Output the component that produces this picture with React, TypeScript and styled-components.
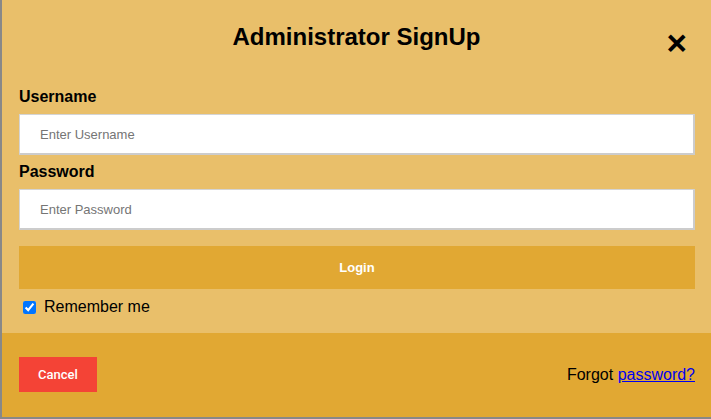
import React from "react";
import styled, { createGlobalStyle } from "styled-components";

const Global = createGlobalStyle`
  html, body { margin: 0; padding: 0; background: #ffffff; }
  body { font-family: "Liberation Sans", Arial, sans-serif; }
  * { box-sizing: border-box; }
`;

const Modal = styled.div`
  width: 711px;
  height: 419px;
  border-left: 2px solid #888888;
  border-bottom: 2px solid #888888;
  background: #e9bf6a;
  display: flex;
  flex-direction: column;
  overflow: hidden;
`;

const Header = styled.div`
  display: grid;
  grid-template-columns: 1fr auto 1fr;
  align-items: start;
  height: 76px;
  padding-top: 23px;
`;

const Title = styled.h2`
  grid-column: 2;
  margin: 0;
  font-size: 24px;
  line-height: 28px;
  font-weight: 700;
  color: #000;
`;

const Close = styled.span`
  grid-column: 3;
  justify-self: end;
  margin-right: 24px;
  margin-top: 5px;
  font-size: 35px;
  line-height: 30px;
  font-weight: 700;
  color: #000;
  cursor: pointer;
`;

const Form = styled.div`
  padding: 0 16px 0 17px;
  display: flex;
  flex-direction: column;
`;

const Label = styled.label<{ $top: number }>`
  font-size: 16px;
  line-height: 20px;
  font-weight: 700;
  color: #000;
  margin-top: ${(p) => p.$top}px;
`;

const Input = styled.input`
  width: 100%;
  height: 41px;
  margin-top: 7px;
  padding: 0 20px;
  border-style: solid;
  border-width: 1px 2px 2px 1px;
  border-color: #d4d4d4 #cccccc #cccccc #d4d4d4;
  background: #fff;
  font-family: "Liberation Sans", Arial, sans-serif;
  font-size: 13px;
  color: #333;
  outline: none;
  &::placeholder { color: #757575; }
`;

const LoginButton = styled.button`
  width: 100%;
  height: 43px;
  margin-top: 16px;
  border: none;
  background: #e1a833;
  color: #fff;
  font-family: "Liberation Sans", Arial, sans-serif;
  font-size: 13px;
  font-weight: 700;
  cursor: pointer;
`;

const Remember = styled.label`
  display: flex;
  align-items: center;
  gap: 8px;
  margin-top: 8px;
  padding-left: 4px;
  height: 20px;
  font-size: 16px;
  color: #000;
`;

const Check = styled.input`
  width: 13px;
  height: 13px;
  margin: 0;
  accent-color: #0075ff;
`;

const Footer = styled.div`
  margin-top: auto;
  height: 84px;
  background: #e1a833;
  display: flex;
  justify-content: space-between;
  align-items: flex-start;
  padding: 24px 16px 0 17px;
`;

const CancelButton = styled.button`
  width: 78px;
  height: 35px;
  border: none;
  background: #f44336;
  color: #fff;
  font-family: Roboto, "Liberation Sans", Arial, sans-serif;
  font-size: 13px;
  font-weight: 500;
  cursor: pointer;
`;

const Forgot = styled.span`
  margin-top: 8px;
  font-size: 16px;
  line-height: 20px;
  color: #000;
  a { color: #0000ee; text-decoration: underline; }
`;

export default function App() {
  return (
    <>
      <Global />
      <Modal>
        <Header>
          <Title>Administrator SignUp</Title>
          <Close>×</Close>
        </Header>
        <Form>
          <Label $top={11}>Username</Label>
          <Input type="text" placeholder="Enter Username" />
          <Label $top={7}>Password</Label>
          <Input type="password" placeholder="Enter Password" />
          <LoginButton>Login</LoginButton>
          <Remember>
            <Check type="checkbox" defaultChecked />
            Remember me
          </Remember>
        </Form>
        <Footer>
          <CancelButton>Cancel</CancelButton>
          <Forgot>
            Forgot <a href="#">password?</a>
          </Forgot>
        </Footer>
      </Modal>
    </>
  );
}
